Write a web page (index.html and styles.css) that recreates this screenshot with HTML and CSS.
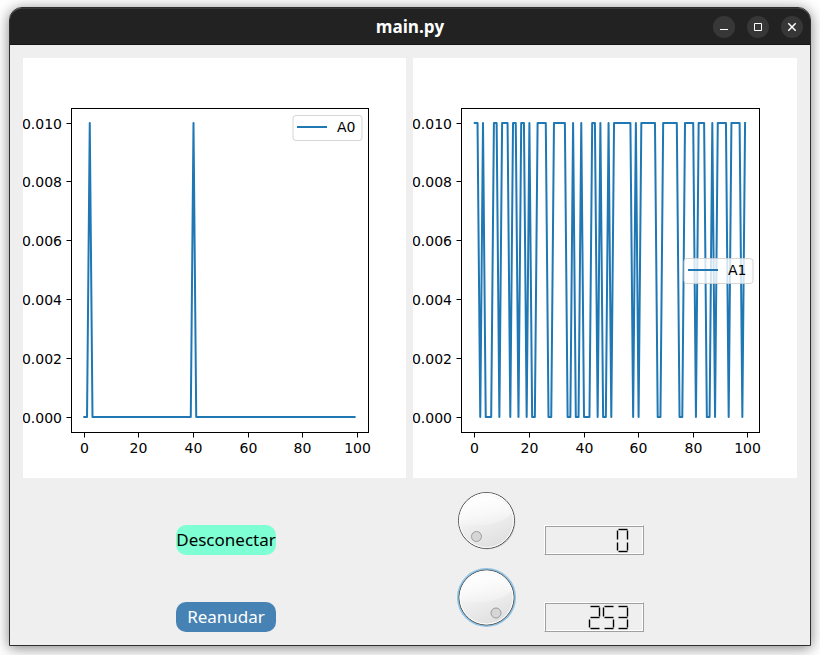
FILE: index.html
```html
<!DOCTYPE html>
<html lang="es">
<head>
<meta charset="utf-8">
<title>main.py</title>
<link rel="stylesheet" href="styles.css">
</head>
<body>
<main class="window">
  <header class="titlebar">
    <h1 class="title">main.py</h1>
    <div class="window-buttons">
      <button class="window-button" type="button" aria-label="Minimizar"><svg viewBox="0 0 22 22"><path d="M7 13.5h8"/></svg></button>
      <button class="window-button" type="button" aria-label="Maximizar"><svg viewBox="0 0 22 22"><path d="M7.5 7.5h7v7h-7z"/></svg></button>
      <button class="window-button" type="button" aria-label="Cerrar"><svg class="close-icon" viewBox="0 0 22 22"><path d="M7.3 7.3l7.4 7.4M14.7 7.3l-7.4 7.4"/></svg></button>
    </div>
  </header>
  <div class="content">
    <section class="charts">
      <svg class="chart" id="chart-a0" viewBox="0 0 383 420" role="img" aria-label="A0"></svg>
      <svg class="chart" id="chart-a1" viewBox="0 0 384 420" role="img" aria-label="A1"></svg>
    </section>
    <section class="controls">
      <button class="action connect" type="button">Desconectar</button>
      <label class="dial">
        <svg viewBox="0 0 60 60" aria-hidden="true">
          <defs>
            <linearGradient id="face" x1="0.3" y1="0" x2="0.7" y2="1">
              <stop offset="0" stop-color="#ffffff"/><stop offset="1" stop-color="#dedede"/>
            </linearGradient>
            <linearGradient id="shine" x1="0" y1="0" x2="0" y2="1">
              <stop offset="0" stop-color="#fff" stop-opacity="0.8"/><stop offset="1" stop-color="#fff" stop-opacity="0.2"/>
            </linearGradient>
          </defs>
          <circle class="dial-shadow" cx="31.5" cy="31.5" r="28"/>
          <circle class="dial-face" cx="30.5" cy="30.5" r="28"/>
          <circle class="dial-rim" cx="30.5" cy="30.5" r="27"/>
          <path class="dial-shine" d="M4 34A27 27 0 0 1 56 23Q42 39 4 34z"/>
          <circle class="dial-knob" cx="20.5" cy="46.5" r="5"/>
        </svg>
        <input type="range" min="0" max="255" value="0" aria-label="Dial 1">
      </label>
      <output class="lcd" id="lcd-1" aria-label="0"></output>

      <button class="action resume" type="button">Reanudar</button>
      <label class="dial">
        <svg viewBox="0 0 60 60" aria-hidden="true">
          <circle class="dial-focus" cx="30.5" cy="30.5" r="28"/>
          <circle class="dial-face" cx="30.5" cy="30.5" r="27.5"/>
          <circle class="dial-rim" cx="30.5" cy="30.5" r="26.5"/>
          <path class="dial-shine" d="M4 34A27 27 0 0 1 56 23Q42 39 4 34z"/>
          <circle class="dial-knob" cx="40" cy="46" r="5"/>
        </svg>
        <input type="range" min="0" max="255" value="253" aria-label="Dial 2">
      </label>
      <output class="lcd" id="lcd-2" aria-label="253"></output>
    </section>
  </div>
</main>
<script src="app.js"></script>
</body>
</html>
```
FILE: styles.css
```css
* {
  box-sizing: border-box;
}

body {
  margin: 0;
  padding: 7px 9px 9px;
  min-height: 100vh;
  display: flex;
  background: #fff;
  font-family: "Noto Sans", sans-serif;
}

.window {
  flex: 1;
  display: flex;
  flex-direction: column;
  background: #efefef;
  border: 1px solid #2e2e2e;
  border-radius: 13px 13px 0 0;
  box-shadow: 0 2px 14px rgba(0, 0, 0, 0.5);
}

.titlebar {
  height: 37px;
  display: grid;
  grid-template-columns: 1fr auto 1fr;
  align-items: center;
  background: #222;
  border-top: 1px solid #383838;
  border-bottom: 1px solid #151515;
  border-radius: 12px 12px 0 0;
}

.title {
  grid-column: 2;
  margin: 0;
  color: #fff;
  font-family: "Open Sans", "Noto Sans", sans-serif;
  font-size: 17px;
  line-height: 24px;
  font-weight: 700;
}

.window-buttons {
  display: flex;
  justify-content: flex-end;
  gap: 12px;
  padding-right: 7px;
}

.window-button {
  width: 22px;
  height: 22px;
  padding: 0;
  border: 0;
  border-radius: 50%;
  background: #373737;
}

.window-button svg {
  display: block;
  fill: none;
  stroke: #fff;
  stroke-width: 1;
}

.window-button .close-icon {
  stroke-width: 1.5;
}

.content {
  flex: 1;
  padding: 13px;
}

.charts {
  display: grid;
  grid-template-columns: 383fr 384fr;
  gap: 7px;
}

.chart {
  display: block;
  width: 100%;
  background: #fff;
}

.chart text {
  font-family: "DejaVu Sans", sans-serif;
  font-size: 14px;
  fill: #000;
}

.y-label {
  text-anchor: end;
}

.x-label {
  text-anchor: middle;
}

.axis {
  fill: none;
  stroke: #000;
  stroke-width: 1;
}

.series {
  fill: none;
  stroke: #1f77b4;
  stroke-width: 2;
  stroke-linejoin: round;
  stroke-linecap: square;
}

.legend {
  fill: #fff;
  fill-opacity: 0.8;
  stroke: #ccc;
  stroke-opacity: 0.8;
}

.controls {
  display: grid;
  grid-template-columns: 406fr 115fr 253fr;
  grid-auto-rows: 77px;
  align-items: end;
}

.action {
  justify-self: center;
  width: 100px;
  height: 30px;
  padding: 0;
  border: 0;
  border-radius: 10px;
  overflow: hidden;
  font-family: "Noto Sans", sans-serif;
  font-size: 17px;
  line-height: 30px;
}

.connect {
  background: #7fffd4;
  color: #000;
}

.resume {
  background: #4682b4;
  color: #fff;
}

.dial {
  position: relative;
  justify-self: center;
  width: 61px;
  height: 61px;
  margin-bottom: 4px;
}

.dial svg {
  display: block;
  width: 60px;
  height: 60px;
}

.dial input {
  position: absolute;
  inset: 0;
  width: 100%;
  height: 100%;
  margin: 0;
  opacity: 0;
}

.dial-shadow {
  fill: #d2d2d2;
}

.dial-face {
  fill: url(#face);
  stroke: #555;
  stroke-width: 1;
}

.dial-rim {
  fill: none;
  stroke: #fff;
}

.dial-shine {
  fill: url(#shine);
}

.dial-knob {
  fill: #d6d6d6;
  stroke: #9c9c9c;
}

.dial-focus {
  fill: none;
  stroke: #8fc4e6;
  stroke-width: 3;
}

.lcd {
  width: 100px;
  height: 30px;
  border: 1px solid;
  border-color: #fff #a0a0a0 #a0a0a0 #fff;
  box-shadow: inset 1px 1px #a0a0a0, inset -1px -1px #fff;
}

.lcd svg {
  display: block;
}

.lcd line {
  stroke: #000;
  stroke-width: 1.4;
}
```
FILE: app.js
```js
const PLOT = { left: 48.5, top: 50.5, bottom: 374.5, unit: 2.73, high: 65, low: 359 };

// Each signal is a list of [value, number of samples].
const signalA0 = [[0, 2], [1, 1], [0, 37], [1, 1], [0, 59]];
const signalA1 = [
  [1, 2], [0, 1], [1, 1], [0, 3], [1, 2], [0, 1], [1, 3], [0, 1], [1, 2], [0, 1],
  [1, 2], [0, 1], [1, 1], [0, 2], [1, 4], [0, 2], [1, 5], [0, 2], [1, 1], [0, 2],
  [1, 1], [0, 3], [1, 2], [0, 1], [1, 1], [0, 2], [1, 1], [0, 1], [1, 7], [0, 1],
  [1, 1], [0, 1], [1, 6], [0, 2], [1, 6], [0, 2], [1, 4], [0, 1], [1, 3], [0, 2],
  [1, 1], [0, 1], [1, 4], [0, 1], [1, 4], [0, 1], [1, 1]
];

function drawChart(id, signal, x0, right, label, legendTop) {
  const samples = signal.flatMap(([value, count]) => Array(count).fill(value));
  const points = samples
    .map((v, i) => `${(x0 + i * PLOT.unit).toFixed(2)},${v ? PLOT.high : PLOT.low}`)
    .join(" ");
  let out = `<polyline class="series" points="${points}"/>`;
  out += `<rect class="axis" x="${PLOT.left}" y="${PLOT.top}" width="${right - PLOT.left}" height="${PLOT.bottom - PLOT.top}"/>`;
  for (let i = 0; i <= 5; i++) {
    const y = Math.floor(PLOT.low - i * 58.8) + 0.5;
    out += `<path class="axis" d="M${PLOT.left} ${y}h-5"/>`;
    out += `<text class="y-label" x="39" y="${y + 5}">${(i * 0.002).toFixed(3)}</text>`;
    const x = Math.floor(x0 + i * 20 * PLOT.unit) + 0.5;
    out += `<path class="axis" d="M${x} ${PLOT.bottom}v5"/>`;
    out += `<text class="x-label" x="${x}" y="395">${i * 20}</text>`;
  }
  const lx = right - 75.5;
  out += `<rect class="legend" x="${lx}" y="${legendTop}" width="69" height="25" rx="3"/>`;
  out += `<path class="series" d="M${lx + 5} ${legendTop + 11.5}h28"/>`;
  out += `<text x="${lx + 44}" y="${legendTop + 16.5}">${label}</text>`;
  document.getElementById(id).innerHTML = out;
}

// Seven segments: top, upper left, upper right, middle, lower left, lower right, bottom.
const SEGMENTS = [
  [2, 1, 11, 1], [1, 2, 1, 11], [11, 2, 11, 11], [2, 12, 11, 12],
  [1, 14, 1, 22], [11, 14, 11, 22], [2, 23, 11, 23]
];
const DIGITS = { 0: [0, 1, 2, 4, 5, 6], 2: [0, 2, 3, 4, 6], 3: [0, 2, 3, 5, 6], 5: [0, 1, 3, 5, 6] };

function drawLcd(id, value) {
  const digits = [...value];
  const lines = digits.map((d, i) => {
    const x = 71.5 - (digits.length - 1 - i) * 14;
    return DIGITS[d].map((s) => {
      const [x1, y1, x2, y2] = SEGMENTS[s];
      return `<line x1="${x + x1}" y1="${y1 + 2.5}" x2="${x + x2}" y2="${y2 + 2.5}"/>`;
    }).join("");
  });
  document.getElementById(id).innerHTML = `<svg viewBox="0 0 98 28" aria-hidden="true">${lines.join("")}</svg>`;
}

drawChart("chart-a0", signalA0, 61.3, 345.5, "A0", 57.5);
drawChart("chart-a1", signalA1, 61.8, 346.5, "A1", 200.5);
drawLcd("lcd-1", "0");
drawLcd("lcd-2", "253");
```
